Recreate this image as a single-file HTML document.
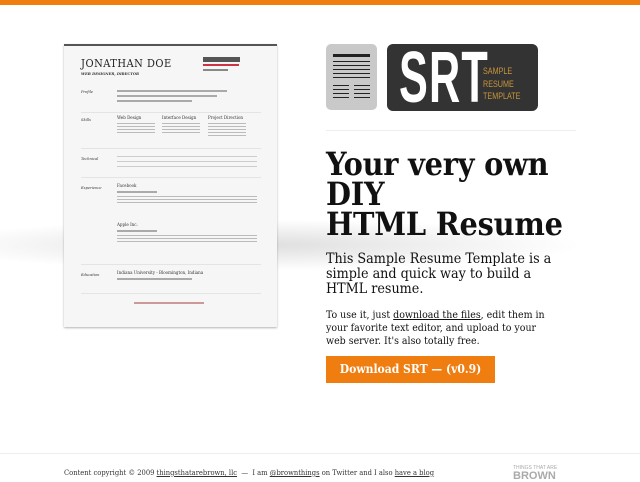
<!DOCTYPE html>
<html><head><meta charset="utf-8"><style>
*{margin:0;padding:0;box-sizing:border-box}
body{width:640px;height:480px;overflow:hidden;background:#fff;font-family:"DejaVu Serif Condensed","DejaVu Serif","Liberation Serif",serif;font-stretch:condensed;color:#111;position:relative}
.top{position:absolute;left:0;top:0;width:640px;height:5px;background:#f07d10}
.shadow{position:absolute;left:0;top:215px;width:640px;height:60px;background:radial-gradient(ellipse at 40% 50%,rgba(0,0,0,.13),rgba(0,0,0,0) 60%)}
.res{position:absolute;left:64px;top:44px;width:213px;height:283px;background:#f6f6f6;border-top:2px solid #555;box-shadow:0 1px 2px rgba(0,0,0,.3);font-size:4px;color:#666;font-family:"DejaVu Serif",serif}
.res .n{position:absolute;left:17px;top:11px;font-size:11px;letter-spacing:.5px;color:#222}
.res .t{position:absolute;left:17px;top:25px;font-size:4px;font-style:italic;font-weight:bold;color:#333}
.res .dl{position:absolute;left:139px;top:11px;width:37px;height:5px;background:#555}
.res .em{position:absolute;left:139px;top:18px;width:36px;height:2px;background:#c34}
.res .ph{position:absolute;left:139px;top:23px;width:25px;height:2px;background:#888}
.lab{position:absolute;left:17px;font-style:italic;color:#333;font-size:4px}
.tx{position:absolute;height:2px;background:#aaa}
.hd{position:absolute;font-size:4.5px;color:#333}
.hr{position:absolute;left:17px;width:180px;height:1px;background:#e4e4e4}
.logo1{position:absolute;left:326px;top:44px;width:51px;height:66px;background:#c9c9c9;border-radius:5px}
.logo1 i{position:absolute;background:#222;height:1px}
.logo2{position:absolute;left:387px;top:44px;width:151px;height:67px;background:#333;border-radius:6px}
.logo2 .s{position:absolute;left:12px;top:-4px;font-family:"Liberation Sans",sans-serif;font-weight:bold;font-size:72px;color:#fff;transform:scaleX(.6);transform-origin:left;letter-spacing:2px;line-height:76px}
.logo2 .sm{position:absolute;left:96px;top:21px;font-family:"Liberation Sans",sans-serif;font-size:9px;line-height:12.5px;color:#c8953a;transform:scaleX(.8);transform-origin:left}
.sep{position:absolute;left:326px;top:130px;width:250px;height:1px;background:#eee}
h1{position:absolute;left:326px;top:149px;font-size:32px;line-height:30px;font-weight:bold;letter-spacing:-.2px}
.p1{position:absolute;left:326px;top:252px;width:230px;font-size:14.2px;line-height:15px}
.p2{position:absolute;left:326px;top:309px;width:226px;font-size:10.5px;line-height:13px}
.btn{position:absolute;left:326px;top:356px;width:169px;height:27px;background:#f07d10;color:#fff;font-weight:bold;font-size:12px;line-height:27px;text-align:center}
.fsep{position:absolute;left:0;top:453px;width:640px;height:1px;background:#eee}
.foot{position:absolute;left:64px;top:468px;font-size:7.5px;color:#333;white-space:nowrap}
.br{position:absolute;left:513px;top:465px;font-family:"Liberation Sans",sans-serif;color:#aaa}
</style></head><body>
<div class="top"></div>
<div class="shadow"></div>
<div class="res">
 <div class="n">JONATHAN DOE</div>
 <div class="t">WEB DESIGNER, DIRECTOR</div>
 <div class="dl"></div><div class="em"></div><div class="ph"></div>
 <div class="lab" style="top:43px">Profile</div>
 <div class="tx" style="left:53px;top:44px;width:110px"></div>
 <div class="tx" style="left:53px;top:49px;width:100px"></div>
 <div class="tx" style="left:53px;top:54px;width:75px"></div>
 <div class="hr" style="top:66px"></div>
 <div class="lab" style="top:71px">Skills</div>
 <div class="hd" style="left:53px;top:70px">Web Design</div>
 <div class="hd" style="left:98px;top:70px">Interface Design</div>
 <div class="hd" style="left:144px;top:70px">Project Direction</div>
 <div class="tx" style="left:53px;top:77px;width:38px;height:12px;background:repeating-linear-gradient(#bbb 0 1px,transparent 1px 3px)"></div>
 <div class="tx" style="left:98px;top:77px;width:38px;height:12px;background:repeating-linear-gradient(#bbb 0 1px,transparent 1px 3px)"></div>
 <div class="tx" style="left:144px;top:77px;width:38px;height:15px;background:repeating-linear-gradient(#bbb 0 1px,transparent 1px 3px)"></div>
 <div class="hr" style="top:102px"></div>
 <div class="lab" style="top:110px">Technical</div>
 <div class="tx" style="left:53px;top:110px;width:140px;height:14px;background:repeating-linear-gradient(#ccc 0 1px,transparent 1px 5px)"></div>
 <div class="hr" style="top:131px"></div>
 <div class="lab" style="top:139px">Experience</div>
 <div class="hd" style="left:53px;top:138px">Facebook</div>
 <div class="tx" style="left:53px;top:145px;width:40px"></div>
 <div class="tx" style="left:53px;top:150px;width:140px;height:8px;background:repeating-linear-gradient(#bbb 0 1px,transparent 1px 3px)"></div>
 <div class="hd" style="left:53px;top:177px">Apple Inc.</div>
 <div class="tx" style="left:53px;top:184px;width:40px"></div>
 <div class="tx" style="left:53px;top:189px;width:140px;height:8px;background:repeating-linear-gradient(#bbb 0 1px,transparent 1px 3px)"></div>
 <div class="hr" style="top:218px"></div>
 <div class="lab" style="top:226px">Education</div>
 <div class="hd" style="left:53px;top:225px">Indiana University - Bloomington, Indiana</div>
 <div class="tx" style="left:53px;top:232px;width:75px"></div>
 <div class="hr" style="top:247px"></div>
 <div class="tx" style="left:70px;top:256px;width:70px;background:#c99"></div>
</div>
<div class="logo1">
 <i style="left:7px;top:10px;width:37px;height:3px"></i>
 <i style="left:7px;top:17px;width:37px"></i><i style="left:7px;top:21px;width:37px"></i><i style="left:7px;top:25px;width:37px"></i><i style="left:7px;top:29px;width:37px"></i><i style="left:7px;top:33px;width:37px"></i>
 <i style="left:7px;top:41px;width:16px"></i><i style="left:7px;top:45px;width:16px"></i><i style="left:7px;top:49px;width:16px"></i><i style="left:7px;top:53px;width:16px"></i>
 <i style="left:28px;top:41px;width:16px"></i><i style="left:28px;top:45px;width:16px"></i><i style="left:28px;top:49px;width:16px"></i><i style="left:28px;top:53px;width:16px"></i>
</div>
<div class="logo2"><div class="s">SRT</div><div class="sm">SAMPLE<br>RESUME<br>TEMPLATE</div></div>
<div class="sep"></div>
<h1>Your very own<br>DIY<br>HTML Resume</h1>
<div class="p1">This Sample Resume Template is a simple and quick way to build a HTML resume.</div>
<div class="p2">To use it, just <u>download the files</u>, edit them in your favorite text editor, and upload to your web server. It's also totally free.</div>
<div class="btn">Download SRT — (v0.9)</div>
<div class="fsep"></div>
<div class="foot">Content copyright © 2009 <u>thingsthatarebrown, llc</u> &nbsp;— &nbsp;I am <u>@brownthings</u> on Twitter and I also <u>have a blog</u></div>
<div class="br"><div style="font-size:5px">THINGS THAT ARE</div><div style="font-size:11px;font-weight:bold;line-height:10px">BROWN</div></div>
</body></html>
